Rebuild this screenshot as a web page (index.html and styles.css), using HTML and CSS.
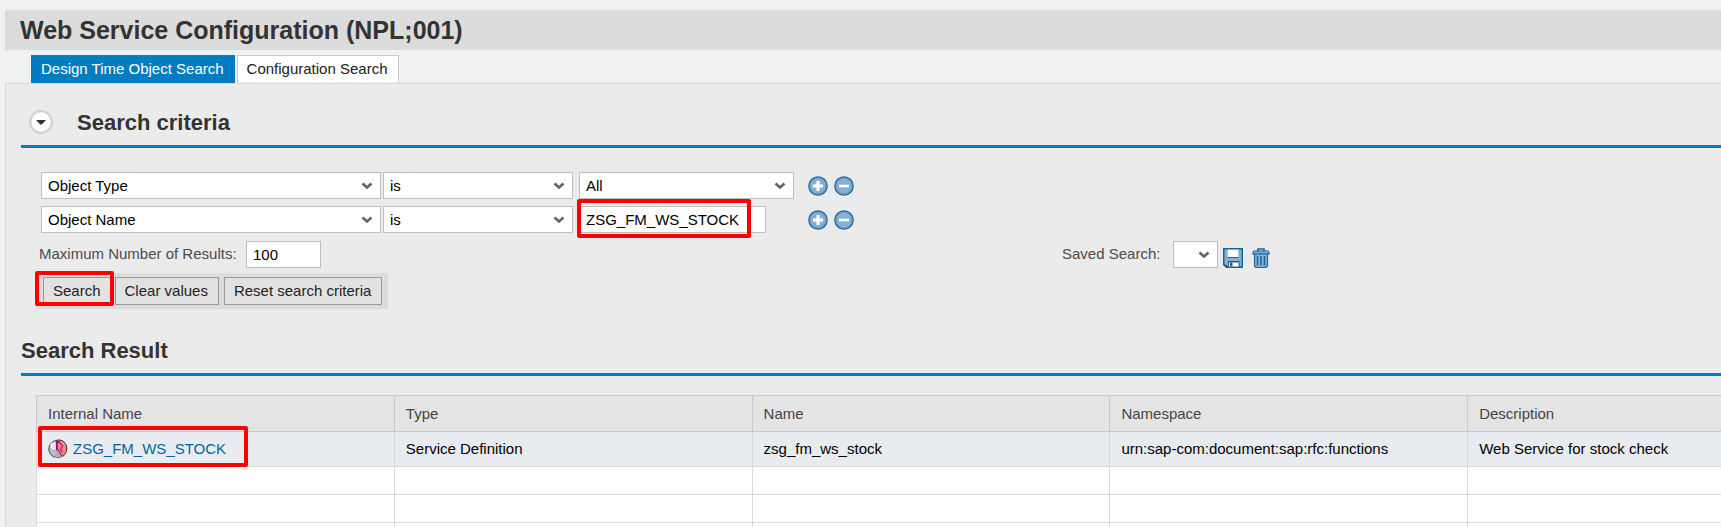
FILE: index.html
```html
<!DOCTYPE html>
<html lang="en">
<head>
<meta charset="utf-8">
<title>Web Service Configuration</title>
<link rel="stylesheet" href="styles.css">
</head>
<body>
<svg class="defs" aria-hidden="true">
  <symbol id="chevron" viewBox="0 0 12 8"><path d="M1.500 1.500 6 5.500 10.500 1.500" fill="none" stroke="#666" stroke-width="2.800"/></symbol>
  <symbol id="plus" viewBox="0 0 20 20"><circle cx="10" cy="10" r="9.200" fill="#86b0d5" stroke="#20689a" stroke-width="1.300"/><circle cx="10" cy="10" r="7.800" fill="none" stroke="#6a9cc6"/><path d="M10 5v10M5 10h10" stroke="#fff" stroke-width="3"/></symbol>
  <symbol id="minus" viewBox="0 0 20 20"><circle cx="10" cy="10" r="9.200" fill="#86b0d5" stroke="#20689a" stroke-width="1.300"/><circle cx="10" cy="10" r="7.800" fill="none" stroke="#6a9cc6"/><path d="M5 10h10" stroke="#fff" stroke-width="2.600"/></symbol>
</svg>

<header class="title-bar"><h1>Web Service Configuration (NPL;001)</h1></header>
<nav class="tabs">
  <button class="tab tab-active" type="button">Design Time Object Search</button>
  <button class="tab" type="button">Configuration Search</button>
</nav>

<main class="panel">
  <section>
    <div class="section-head section-head-toggle">
      <button class="toggle" type="button" aria-label="Collapse search criteria">
        <svg viewBox="0 0 24 24"><circle cx="12" cy="12" r="10.800" fill="#fff" stroke="#d2d2d2" stroke-width="2.200"/><path d="M7 10h10l-4.200 4.600h-1.600z" fill="#333"/></svg>
      </button>
      <h2>Search criteria</h2>
    </div>
    <form class="criteria">
      <div class="row">
        <span class="select select-field"><select aria-label="Criterion 1 field"><option>Object Type</option></select><svg class="chevron"><use href="#chevron"/></svg></span>
        <span class="select select-operator"><select aria-label="Criterion 1 operator"><option>is</option></select><svg class="chevron"><use href="#chevron"/></svg></span>
        <div class="value"><span class="select select-value"><select aria-label="Criterion 1 value"><option>All</option></select><svg class="chevron"><use href="#chevron"/></svg></span></div>
        <button class="icon-button" type="button" aria-label="Add line"><svg><use href="#plus"/></svg></button>
        <button class="icon-button" type="button" aria-label="Remove line"><svg><use href="#minus"/></svg></button>
      </div>
      <div class="row">
        <span class="select select-field"><select aria-label="Criterion 2 field"><option>Object Name</option></select><svg class="chevron"><use href="#chevron"/></svg></span>
        <span class="select select-operator"><select aria-label="Criterion 2 operator"><option>is</option></select><svg class="chevron"><use href="#chevron"/></svg></span>
        <div class="value"><input class="text-input name-input" type="text" value="ZSG_FM_WS_STOCK" aria-label="Criterion 2 value"><span class="mark mark-value"></span></div>
        <button class="icon-button" type="button" aria-label="Add line"><svg><use href="#plus"/></svg></button>
        <button class="icon-button" type="button" aria-label="Remove line"><svg><use href="#minus"/></svg></button>
      </div>
      <div class="options">
        <div class="max-results">
          <label for="max">Maximum Number of Results:</label>
          <input class="text-input max-input" id="max" type="text" value="100">
        </div>
        <div class="saved">
          <label for="saved">Saved Search:</label>
          <span class="select select-saved"><select id="saved"><option></option></select><svg class="chevron"><use href="#chevron"/></svg></span>
          <button class="icon-button" type="button" aria-label="Save search">
            <svg viewBox="0 0 20 20"><path d="M0 0h20v20H3L0 17z" fill="#1d6496"/><path d="M1.500 1.500h3v8.500h11V1.500h3v17h-2V13H5v5l-3.500-2z" fill="#86b0d5"/><path d="M4.500 1.500h11V9h-11zM6 14.500h9.500v4H6z" fill="#fff"/><path d="M7 14.500h2.500v4H7z" fill="#1d6496"/></svg>
          </button>
          <button class="icon-button delete-button" type="button" aria-label="Delete search">
            <svg viewBox="0 0 20 20"><path d="M7 3.500V1h6v2.500" fill="none" stroke="#1d6496" stroke-width="1.600"/><path d="M2.500 3h15l1 3h-17z" fill="#86b0d5" stroke="#1d6496"/><path d="M3.500 6h13v12l-1.500 1.500H5L3.500 18z" fill="#86b0d5" stroke="#1d6496" stroke-width="1.200"/><path d="M6.500 8v9.500M10 8v9.500M13.500 8v9.500" stroke="#1d6496" stroke-width="1.500"/></svg>
          </button>
        </div>
      </div>
      <div class="toolbar">
        <button class="button search-button" type="button">Search</button>
        <button class="button clear-button" type="button">Clear values</button>
        <button class="button" type="button">Reset search criteria</button>
        <span class="mark mark-search"></span>
      </div>
    </form>
  </section>

  <section class="results">
    <div class="section-head"><h2>Search Result</h2></div>
    <div class="table-wrap">
      <table>
        <thead>
          <tr><th>Internal Name</th><th>Type</th><th>Name</th><th>Namespace</th><th>Description</th></tr>
        </thead>
        <tbody>
          <tr class="selected">
            <td class="marked-cell">
              <a href="#"><svg class="service-icon" viewBox="0 0 20 20"><circle cx="9.500" cy="10" r="8.700" fill="#bbb" stroke="#444"/><circle cx="6" cy="7" r="3.800" fill="#e8e8e8"/><path d="M9 1.200c6-1.200 10 3.300 9.800 8.800-.2 3.500-2 6-4.300 7.400L9 11z" fill="#f58a88" stroke="#333"/><path d="M8.800 1.500v8.500l4 6M9 4l3-1.500" fill="none" stroke="#8c1288" stroke-width="1.800"/><path d="m12 4 2.500 3-2 3.500 2 3" fill="none" stroke="#d8205c" stroke-width="1.500"/><path d="m9.500 11 4.500 7-8 1z" fill="#aaa"/></svg>ZSG_FM_WS_STOCK</a>
              <span class="mark mark-result"></span>
            </td>
            <td>Service Definition</td><td>zsg_fm_ws_stock</td><td>urn:sap-com:document:sap:rfc:functions</td><td>Web Service for stock check</td>
          </tr>
          <tr><td></td><td></td><td></td><td></td><td></td></tr>
          <tr><td></td><td></td><td></td><td></td><td></td></tr>
          <tr><td></td><td></td><td></td><td></td><td></td></tr>
        </tbody>
      </table>
    </div>
  </section>
</main>
</body>
</html>
```

FILE: styles.css
```css
* { box-sizing: border-box; }

body {
  margin: 0;
  padding: 10px 0 0 5px;
  overflow: hidden;
  background: #f1f1f1;
  color: #000;
  font: 15px/18px "Liberation Sans", Arial, sans-serif;
}

button, input, select { font: inherit; color: inherit; margin: 0; border-radius: 0; }
svg { display: block; }
h1, h2 { margin: 0; color: #333; font-weight: bold; }
h1 { font-size: 25px; line-height: 40px; }
h2 { font-size: 22px; line-height: 26px; }

.defs { position: absolute; width: 0; height: 0; }

.title-bar { padding-left: 15px; background: #dcdcdc; }

.tabs { display: flex; gap: 2px; padding: 5px 0 0 26px; }
.tab {
  height: 28px;
  padding: 0 10px 0 9px;
  border: 1px solid #ccc;
  border-bottom-color: #eee;
  background: #fff;
  color: #222;
}
.tab-active { border-color: #007cc0; background: #007cc0; color: #fff; }

.panel {
  border: 1px solid #d9d9d9;
  border-width: 1px 0 0 1px;
  background: #ebebeb;
}

.section-head {
  display: flex;
  margin-left: 15px;
  padding: 29px 0 9px;
  border-bottom: 3px solid #007cc0;
}
.section-head-toggle { gap: 24px; padding: 26px 0 9px 8px; }
.toggle { width: 24px; height: 24px; padding: 0; border: 0; background: none; }

.criteria { padding: 24px 0 0 35px; }
.row { display: flex; gap: 2px; margin-bottom: 7px; }

.select { position: relative; display: block; height: 27px; }
.select select {
  display: block;
  width: 100%;
  height: 100%;
  padding: 0 24px 0 6px;
  border: 1px solid #bfbfbf;
  background: #fff;
  appearance: none;
}
.chevron {
  position: absolute;
  top: 10px;
  right: 8px;
  width: 12px;
  height: 8px;
  pointer-events: none;
}
.select-field { width: 340px; }
.select-operator { width: 190px; }
.select-value { width: 215px; }
.select-saved { width: 45px; }

.value { position: relative; width: 225px; margin: 0 2px 0 4px; }
.text-input {
  display: block;
  height: 27px;
  padding: 0 6px;
  border: 1px solid #bfbfbf;
  background: #fff;
}
.name-input { width: 187px; }
.max-input { width: 75px; }

.icon-button {
  width: 20px;
  height: 20px;
  margin-right: 4px;
  padding: 0;
  border: 0;
  background: none;
  align-self: center;
}
.icon-button svg { width: 20px; height: 20px; }

.options { display: flex; margin: 8px 0 5px -2px; color: #4c4c4c; }
.options label { line-height: 26px; }
.max-results { display: flex; justify-content: space-between; width: 282px; }
.saved { display: flex; margin-left: 741px; }
.saved label { width: 111px; }
.saved .icon-button { margin: 0 0 0 5px; align-self: flex-end; }
.saved .delete-button { margin-left: 8px; }
.max-input, .select-saved { color: #000; }

.toolbar {
  position: relative;
  display: flex;
  width: max-content;
  height: 36px;
  margin-left: -5px;
  padding: 4px 6px 4px 7px;
  background: #dcdcdc;
}
.button {
  padding: 0 10px 0 9px;
  border: 1px solid #999;
  background: #e2e2e2;
  color: #222;
}
.search-button { margin-right: 3px; }
.clear-button { margin-right: 5px; }

/* Highlight frames laid over the content */
.mark {
  position: absolute;
  border: 4px solid #f00;
  border-radius: 2px;
  pointer-events: none;
}
.mark-value { top: -7px; left: -2px; width: 174px; height: 39px; }
.mark-search { top: -2px; left: -1px; width: 79px; height: 35px; }
.mark-result { top: -6px; left: 1px; width: 210px; height: 41px; }

.table-wrap { padding: 19px 0 0 30px; overflow: hidden; }
table { width: 1790px; border-collapse: collapse; table-layout: fixed; }
th, td { padding: 0 11px; text-align: left; font-weight: normal; }
th { height: 36px; border: 1px solid #c8c8c8; background: #e4e4e4; color: #444; }
td { height: 28px; border: 1px solid #d9d9d9; background: #fff; }
.selected td { height: 35px; border-top-color: #c8c8c8; background: #e8ecf0; }
.marked-cell { position: relative; }
.marked-cell a {
  display: flex;
  align-items: center;
  gap: 5px;
  color: #00679e;
  text-decoration: none;
}
.service-icon { width: 20px; height: 20px; }
```
